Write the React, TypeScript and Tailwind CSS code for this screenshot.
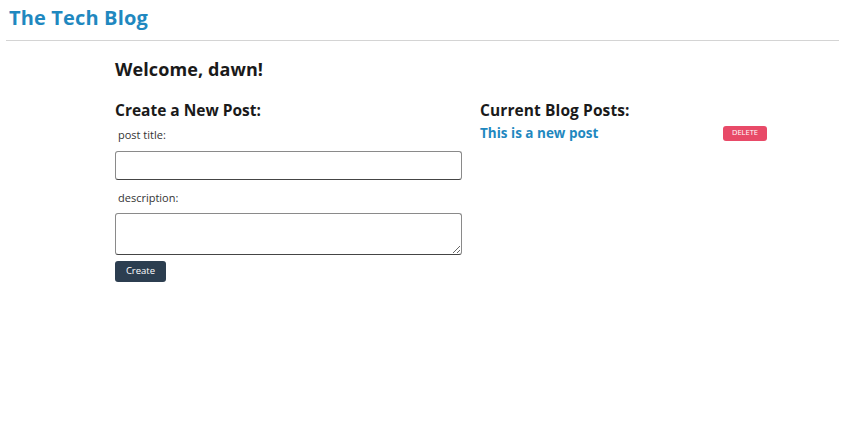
export default function App() {
  return (
    <div className="min-h-[445px] bg-white font-['Open_Sans',sans-serif] text-[#1a1a1a]">
      <header className="mx-[6px] h-[41px] border-b border-[#d4d4d4] pl-[3px] pt-[3px]">
        <h1 className="text-[20px] font-bold leading-[30px] tracking-[0.15px] text-[#1f88c0]">The Tech Blog</h1>
      </header>

      <main className="pl-[115px] pt-[15px]">
        <h2 className="text-[18px] font-bold leading-[26px] tracking-[0.1px]">Welcome, dawn!</h2>

        <div className="mt-[16px] flex gap-[18px]">
          <section className="w-[347px]">
            <h3 className="text-[15.5px] font-bold leading-[24px] tracking-[0px]">Create a New Post:</h3>
            <label className="mt-[4px] block pl-[3px] text-[11px] leading-[18px] text-[#333]">post title:</label>
            <input
              type="text"
              className="mt-[7px] block h-[29px] w-full rounded-[3px] border border-[#8a8a8a] border-b-[#454545]"
            />
            <label className="mt-[9px] block pl-[3px] text-[11px] leading-[18px] text-[#333]">description:</label>
            <textarea className="mt-[6px] block h-[42px] w-full resize-y rounded-[3px] border border-[#8a8a8a] border-b-[#454545]" />
            <button className="mt-[6px] h-[21px] w-[51px] rounded-[3px] bg-[#2c3e50] text-[9.5px] text-white">Create</button>
          </section>

          <section className="w-[287px]">
            <h3 className="text-[15.5px] font-bold leading-[24px] tracking-[0.1px]">Current Blog Posts:</h3>
            <div className="mt-[1px] flex items-center justify-between">
              <a href="#" className="text-[13.5px] font-bold leading-[20px] text-[#1f88c0]">This is a new post</a>
              <button className="h-[15px] w-[44px] rounded-[3px] bg-[#e84a68] text-[7.5px] uppercase leading-none text-white">Delete</button>
            </div>
          </section>
        </div>
      </main>
    </div>
  );
}
